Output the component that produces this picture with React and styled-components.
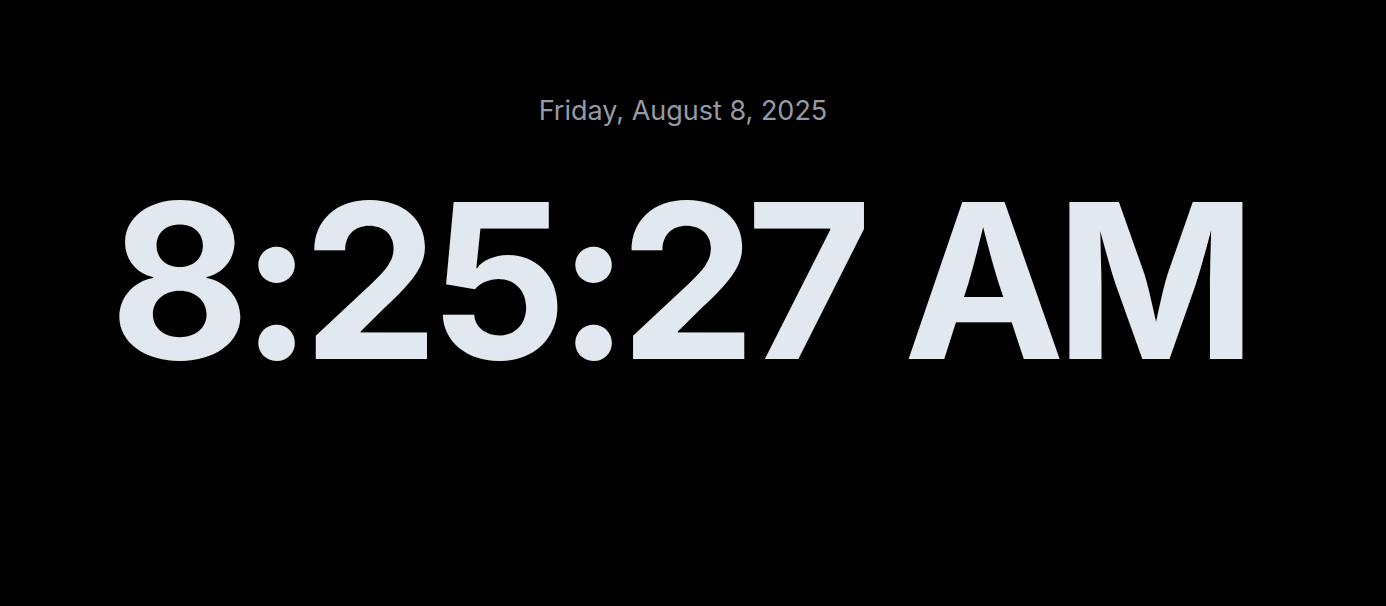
import React from 'react';
import styled, { createGlobalStyle } from 'styled-components';

const GlobalStyle = createGlobalStyle`
  html, body {
    margin: 0;
    padding: 0;
    background: #000;
  }
  body {
    font-family: Inter, "Noto Sans", sans-serif;
  }
`;

const Screen = styled.main`
  min-height: 606px;
  background: #000;
  display: flex;
  flex-direction: column;
  align-items: center;
  padding: 94px 20px 0 0;
  box-sizing: border-box;
`;

const DateLine = styled.div`
  color: #949ba6;
  font-size: 27px;
  line-height: 34px;
  font-weight: 400;
`;

const Time = styled.div`
  margin-top: 45px;
  padding-right: 0.045em;
  color: #e2e8f0;
  font-size: 216px;
  line-height: 1;
  font-weight: 700;
  letter-spacing: -0.045em;
  white-space: nowrap;
`;

export default function App() {
  return (
    <>
      <GlobalStyle />
      <Screen>
        <DateLine>Friday, August 8, 2025</DateLine>
        <Time>8:25:27 AM</Time>
      </Screen>
    </>
  );
}
